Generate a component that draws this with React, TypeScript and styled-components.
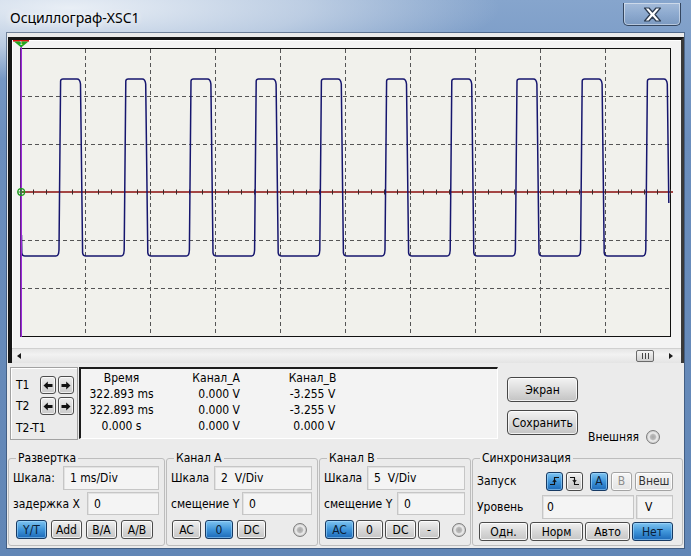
import React from "react";
import styled, { createGlobalStyle } from "styled-components";

const UI = `"DejaVu Sans Condensed", "DejaVu Sans", sans-serif`;

const Global = createGlobalStyle`
  html, body { margin: 0; padding: 0; }
  body { width: 691px; height: 556px; overflow: hidden; background: #6a8dbc; font-family: ${UI}; }
  * { box-sizing: border-box; }
`;

const Window = styled.div`
  width: 691px;
  height: 556px;
  display: flex;
  flex-direction: column;
  background:
    radial-gradient(ellipse 430px 72px at 70px 8px, rgba(236, 241, 247, 0.97), rgba(226, 233, 242, 0.6) 55%, rgba(226, 233, 242, 0) 100%),
    linear-gradient(180deg, #86a5cd 0%, #6b8ebd 25%, #6186b6 100%);
`;

const TitleBar = styled.div`
  height: 33px;
  flex: none;
  display: flex;
  align-items: flex-start;
  justify-content: space-between;
  padding: 0 10px 0 10px;
`;

const Title = styled.div`
  font-family: "Noto Sans", "Open Sans", sans-serif;
  font-size: 14px;
  line-height: 20px;
  margin-top: 8px;
  color: #000;
  text-shadow: 0 0 6px rgba(255, 255, 255, 0.95), 0 0 12px rgba(255, 255, 255, 0.7);
`;

const CloseButton = styled.div`
  margin-top: 3px;
  width: 58px;
  height: 23px;
  border: 1px solid #34465f;
  border-top: none;
  border-radius: 0 0 5px 5px;
  background: linear-gradient(180deg, rgba(255, 255, 255, 0.25), rgba(255, 255, 255, 0.08) 50%, rgba(0, 0, 0, 0.05));
  box-shadow: inset 0 0 0 1px rgba(255, 255, 255, 0.45);
  display: flex;
  align-items: center;
  justify-content: center;
`;

const Client = styled.div`
  flex: none;
  margin: 0 7px 8px 7px;
  height: 515px;
  background: #ebebeb;
  box-shadow: 0 0 0 1px rgba(40, 60, 90, 0.55);
  display: flex;
  flex-direction: column;
`;

const ScreenPanel = styled.div`
  margin: 4px 0 0 1px;
  width: 676px;
  border-left: 4px solid #161616;
  border-top: 3px solid #161616;
  border-right: 3px solid #3a3a3a;
  display: flex;
  flex-direction: column;
`;

const ScreenArea = styled.div`
  padding: 8px 10px 11px 8px;
  background: #f3f3f3;
  box-shadow: inset 0 1px 0 #ffffff, inset 1px 0 0 #ffffff;
`;

const GridBox = styled.div`
  width: 651px;
  height: 289px;
  background: #f1f1ec;
`;

const ScopeSvg = styled.svg`
  display: block;
  overflow: visible;
`;

const ScrollBar = styled.div`
  height: 15px;
  display: flex;
  align-items: center;
  padding: 0 8px 0 5px;
  background: linear-gradient(180deg, #e6e6e6, #f2f2f2 40%, #e4e4e4);
  border-top: 1px solid #d0d0d0;
`;

const ArrowTri = styled.div<{ $dir: "left" | "right" }>`
  width: 0;
  height: 0;
  border-top: 3.5px solid transparent;
  border-bottom: 3.5px solid transparent;
  ${(p) => (p.$dir === "left" ? "border-right: 4px solid #1a1a1a;" : "border-left: 4px solid #1a1a1a;")}
`;

const Spacer = styled.div`
  flex: 1;
`;

const Thumb = styled.div`
  width: 18px;
  height: 12px;
  margin-right: 15px;
  border: 1px solid #6a6a6a;
  border-radius: 2px;
  background: linear-gradient(180deg, #f4f4f4, #cfcfcf);
  display: flex;
  align-items: center;
  justify-content: center;
  gap: 2px;
`;

const Grip = styled.div`
  width: 1px;
  height: 6px;
  background: #444;
`;

const ReadoutRow = styled.div`
  margin-top: 4px;
  height: 73px;
  display: flex;
  align-items: flex-start;
  padding-left: 3px;
`;

const TPanel = styled.div`
  width: 68px;
  height: 73px;
  border: 1px solid #a2a2a2;
  box-shadow: inset 1px 1px 0 #ffffff;
  padding-left: 5px;
  display: flex;
  flex-direction: column;
`;

const TRow = styled.div<{ $mt: number }>`
  margin-top: ${(p) => p.$mt}px;
  height: 18px;
  display: flex;
  align-items: center;
  gap: 2px;
`;

const TLabel = styled.div<{ $w?: number }>`
  width: ${(p) => p.$w ?? 22}px;
  font-size: 12px;
  color: #000;
  line-height: 14px;
`;

const ArrowBtn = styled.div`
  width: 16px;
  height: 18px;
  border: 1px solid #4d4d4d;
  border-radius: 3px;
  background: linear-gradient(180deg, #ededed, #c9c9c9);
  box-shadow: inset 0 0 0 1px rgba(255, 255, 255, 0.7);
  display: flex;
  align-items: center;
  justify-content: center;
`;

const DiffLabel = styled.div`
  margin-top: 6px;
  height: 14px;
  font-size: 12px;
  line-height: 14px;
  color: #000;
`;

const ReadoutBox = styled.div`
  margin-left: 1px;
  width: 419px;
  height: 72px;
  border-top: 2px solid #1c1c1c;
  border-left: 2px solid #1c1c1c;
  border-right: 1px solid #ffffff;
  border-bottom: 1px solid #ffffff;
  background: #f3f3f3;
  padding-top: 1px;
  display: grid;
  grid-template-columns: 81px 83px 135px;
  grid-auto-rows: 16px;
  font-size: 12px;
  color: #000;
`;

const Cell = styled.div<{ $align: "center" | "right" }>`
  line-height: 16px;
  white-space: pre;
  text-align: ${(p) => p.$align};
  padding-right: ${(p) => (p.$align === "right" ? 5 : 0)}px;
`;

const ActionColumn = styled.div`
  margin-left: 9px;
  width: 71px;
  padding-top: 10px;
  display: flex;
  flex-direction: column;
  gap: 8px;
`;

const BigButton = styled.button`
  height: 25px;
  padding: 0;
  font-family: ${UI};
  font-size: 12px;
  color: #000;
  border: 1px solid #474747;
  border-radius: 4px;
  background: linear-gradient(180deg, #f3f3f3, #dcdcdc 50%, #c3c3c3);
  box-shadow: inset 0 0 0 1px rgba(255, 255, 255, 0.75);
`;

const External = styled.div`
  margin: 62px 0 0 10px;
  height: 16px;
  display: flex;
  align-items: center;
  gap: 7px;
  font-size: 12px;
  color: #000;
`;

const Radio = styled.div<{ $mr?: number }>`
  width: 14px;
  height: 14px;
  flex: none;
  margin-right: ${(p) => p.$mr ?? 0}px;
  border-radius: 50%;
  border: 1px solid #7d7d7d;
  background: radial-gradient(circle at 50% 50%, #a8a8a8 0, #b9b9b9 2.5px, #eeeeee 4px, #d6d6d6 5.5px, #b5b5b5 7px);
`;

const GroupsRow = styled.div`
  margin-top: 12px;
  display: flex;
  gap: 1px;
  padding-left: 1px;
`;

const Group = styled.fieldset<{ $w: number; $pr?: number }>`
  margin: 0;
  min-width: 0;
  width: ${(p) => p.$w}px;
  height: 94px;
  padding: 0 ${(p) => p.$pr ?? 5}px 0 4px;
  border: 1px solid #bdbdbd;
  border-radius: 3px;
  display: flex;
  flex-direction: column;
`;

const Legend = styled.legend`
  margin-left: 3px;
  padding: 0 2px;
  font-size: 12px;
  line-height: 13px;
  color: #000;
`;

const Row = styled.div<{ $h: number; $mt: number }>`
  height: ${(p) => p.$h}px;
  margin-top: ${(p) => p.$mt}px;
  display: flex;
  align-items: center;
`;

const Label = styled.div`
  font-size: 12px;
  color: #000;
  white-space: pre;
`;

const Field = styled.div<{ $w: number; $pl?: number }>`
  margin-left: auto;
  width: ${(p) => p.$w}px;
  height: 100%;
  padding-left: ${(p) => p.$pl ?? 6}px;
  display: flex;
  align-items: center;
  font-size: 12px;
  color: #000;
  white-space: pre;
  background: #f4f4f4;
  border: 1px solid #c6c6c6;
  box-shadow: inset 1px 1px 0 #e2e2e2;
`;

const FieldGroup = styled.div`
  margin-left: auto;
  height: 100%;
  display: flex;
  gap: 2px;
`;

const ButtonRow = styled.div<{ $pl: number; $gap: number }>`
  height: 100%;
  flex: 1;
  display: flex;
  align-items: center;
  gap: ${(p) => p.$gap}px;
  padding-left: ${(p) => p.$pl}px;
`;

const Btn = styled.button<{ $w: number; $on?: boolean; $dim?: boolean; $soft?: boolean }>`
  width: ${(p) => p.$w}px;
  height: 19px;
  flex: none;
  padding: 0;
  display: flex;
  align-items: center;
  justify-content: center;
  font-family: ${UI};
  font-size: 12px;
  color: ${(p) => (p.$dim ? "#8c8c8c" : p.$soft ? "#333" : p.$on ? "#0b1e38" : "#000")};
  border: 1px solid ${(p) => (p.$on ? "#173a63" : p.$dim || p.$soft ? "#a3a3a3" : "#4b4b4b")};
  border-radius: 3px;
  background: ${(p) =>
    p.$on
      ? "linear-gradient(180deg, #7fc4f0, #3f95da 50%, #1c69b8)"
      : p.$dim || p.$soft
      ? "linear-gradient(180deg, #f6f6f6, #e3e3e3)"
      : "linear-gradient(180deg, #f1f1f1, #d8d8d8 50%, #c6c6c6)"};
  box-shadow: inset 0 0 0 1px ${(p) => (p.$on ? "rgba(170, 220, 255, 0.55)" : "rgba(255, 255, 255, 0.8)")};
`;

const TrigButtons = styled.div`
  margin-left: auto;
  display: flex;
  align-items: center;
  gap: 3px;
`;

const SourceButtons = styled.div`
  margin-left: 7px;
  display: flex;
  align-items: center;
  gap: 3px;
`;

const HIGH = 31;
const LOW = 208;

function tracePath(): string {
  const period = 65.2;
  const first = 40;
  let d = `M1.5 187 L1.8 ${LOW - 3} Q2 ${LOW} 5 ${LOW}`;
  for (let k = 0; k < 10; k++) {
    const r = first + period * k;
    d += ` L${(r - 4).toFixed(1)} ${LOW} Q${(r - 1.2).toFixed(1)} ${LOW} ${(r - 1).toFixed(1)} ${LOW - 6}`;
    d += ` L${(r + 0.6).toFixed(1)} ${HIGH + 2} Q${(r + 0.8).toFixed(1)} ${HIGH} ${(r + 3).toFixed(1)} ${HIGH}`;
    d += ` L${(r + 17).toFixed(1)} ${HIGH} Q${(r + 20).toFixed(1)} ${HIGH} ${(r + 20.5).toFixed(1)} ${HIGH + 5}`;
    if (k < 9) {
      d += ` L${(r + 22.6).toFixed(1)} ${LOW - 3} Q${(r + 23).toFixed(1)} ${LOW} ${(r + 26).toFixed(1)} ${LOW}`;
    } else {
      d += ` L${(r + 22).toFixed(1)} 155`;
    }
  }
  return d;
}

const Scope: React.FC = () => {
  const vLines = Array.from({ length: 9 }, (_, i) => 65 * (i + 1) + 0.5);
  const hLines = [48, 96, 192, 240].map((y) => y + 0.5);
  const ticks = Array.from({ length: 50 }, (_, i) => 13 * (i + 1));
  return (
    <ScopeSvg width={651} height={289} viewBox="0 0 651 289">
      <rect x={0.5} y={0.5} width={650} height={288} fill="none" stroke="#111" strokeWidth={1} />
      {vLines.map((x) => (
        <line key={`v${x}`} x1={x} y1={1} x2={x} y2={288} stroke="#555" strokeWidth={1} strokeDasharray="4 3" />
      ))}
      {hLines.map((y) => (
        <line key={`h${y}`} x1={1} y1={y} x2={650} y2={y} stroke="#555" strokeWidth={1} strokeDasharray="4 3" />
      ))}
      <line x1={0} y1={144} x2={653} y2={144} stroke="#8a0c0c" strokeWidth={1.6} />
      {ticks.map((x) => (
        <line key={`t${x}`} x1={x + 0.5} y1={141.5} x2={x + 0.5} y2={146.5} stroke="#3a2a2a" strokeWidth={1} />
      ))}
      <path d={tracePath()} fill="none" stroke="#16166e" strokeWidth={1.5} strokeLinejoin="round" />
      <line x1={1.2} y1={-8} x2={1.2} y2={289} stroke="#9a2bd8" strokeWidth={1.6} />
      <rect x={-7} y={-8} width={16} height={1.6} fill="#d81010" />
      <polygon points="-6,-6.4 8.5,-6.4 1.2,-0.5" fill="#1fa51f" />
      <text x={1.2} y={-3} fontSize={5} fill="#ffffff" textAnchor="middle" fontFamily="DejaVu Sans, sans-serif">
        1
      </text>
      <circle cx={1.2} cy={144} r={3.4} fill="none" stroke="#1f9a1f" strokeWidth={1.2} />
      <line x1={-2.6} y1={144} x2={5} y2={144} stroke="#1f9a1f" strokeWidth={1} />
      <line x1={1.2} y1={140.4} x2={1.2} y2={147.6} stroke="#1f9a1f" strokeWidth={1} />
    </ScopeSvg>
  );
};

const Arrow: React.FC<{ dir: "left" | "right" }> = ({ dir }) => (
  <svg width={10} height={9} viewBox="0 0 10 9">
    <path
      d="M0.5 4.5 L4.8 0.5 V3 H9.5 V6 H4.8 V8.5 Z"
      fill="#111"
      transform={dir === "right" ? "translate(10 0) scale(-1 1)" : undefined}
    />
  </svg>
);

const EdgeIcon: React.FC<{ falling?: boolean }> = ({ falling }) => (
  <svg width={11} height={12} viewBox="0 0 11 12">
    {falling ? (
      <>
        <path d="M1 2.5 H5.5 V9.5 H10" fill="none" stroke="#111" strokeWidth={1.1} />
        <path d="M3.8 5 L5.5 7.2 L7.2 5" fill="none" stroke="#111" strokeWidth={1.1} />
      </>
    ) : (
      <>
        <path d="M1 9.5 H5.5 V2.5 H10" fill="none" stroke="#111" strokeWidth={1.1} />
        <path d="M3.8 7 L5.5 4.8 L7.2 7" fill="none" stroke="#111" strokeWidth={1.1} />
      </>
    )}
  </svg>
);

const CloseGlyph: React.FC = () => (
  <svg width={19} height={15} viewBox="0 0 19 15">
    <path
      d="M1.5 1 H6 L9.5 5 L13 1 H17.5 L12 7.5 L17.5 14 H13 L9.5 10 L6 14 H1.5 L7 7.5 Z"
      fill="#ffffff"
      stroke="#2b3a4f"
      strokeWidth={1.2}
      strokeLinejoin="round"
    />
  </svg>
);

const readout: [string, string, string][] = [
  ["Время", "Канал_A", "Канал_B"],
  ["322.893 ms", "0.000 V", "-3.255 V"],
  ["322.893 ms", "0.000 V", "-3.255 V"],
  ["0.000 s", "0.000 V", " 0.000 V"],
];

export default function App() {
  return (
    <>
      <Global />
      <Window>
        <TitleBar>
          <Title>Осциллограф-XSC1</Title>
          <CloseButton>
            <CloseGlyph />
          </CloseButton>
        </TitleBar>
        <Client>
          <ScreenPanel>
            <ScreenArea>
              <GridBox>
                <Scope />
              </GridBox>
            </ScreenArea>
            <ScrollBar>
              <ArrowTri $dir="left" />
              <Spacer />
              <Thumb>
                <Grip />
                <Grip />
                <Grip />
              </Thumb>
              <ArrowTri $dir="right" />
            </ScrollBar>
          </ScreenPanel>

          <ReadoutRow>
            <TPanel>
              <TRow $mt={8}>
                <TLabel>T1</TLabel>
                <ArrowBtn>
                  <Arrow dir="left" />
                </ArrowBtn>
                <ArrowBtn>
                  <Arrow dir="right" />
                </ArrowBtn>
              </TRow>
              <TRow $mt={3}>
                <TLabel>T2</TLabel>
                <ArrowBtn>
                  <Arrow dir="left" />
                </ArrowBtn>
                <ArrowBtn>
                  <Arrow dir="right" />
                </ArrowBtn>
              </TRow>
              <DiffLabel>T2-T1</DiffLabel>
            </TPanel>
            <ReadoutBox>
              {readout.map((row, i) => (
                <React.Fragment key={i}>
                  <Cell $align="center">{row[0]}</Cell>
                  <Cell $align="right">{row[1]}</Cell>
                  <Cell $align="center">{row[2]}</Cell>
                </React.Fragment>
              ))}
            </ReadoutBox>
            <ActionColumn>
              <BigButton>Экран</BigButton>
              <BigButton>Сохранить</BigButton>
            </ActionColumn>
            <External>
              <span>Внешняя</span>
              <Radio />
            </External>
          </ReadoutRow>

          <GroupsRow>
            <Group $w={157}>
              <Legend>Развертка</Legend>
              <Row $h={24} $mt={1}>
                <Label>Шкала:</Label>
                <Field $w={96}>1 ms/Div</Field>
              </Row>
              <Row $h={23} $mt={2}>
                <Label>задержка X</Label>
                <Field $w={72}>0</Field>
              </Row>
              <Row $h={19} $mt={5}>
                <ButtonRow $pl={3} $gap={4}>
                  <Btn $w={31} $on>
                    Y/T
                  </Btn>
                  <Btn $w={31}>Add</Btn>
                  <Btn $w={31}>B/A</Btn>
                  <Btn $w={32}>A/B</Btn>
                </ButtonRow>
              </Row>
            </Group>

            <Group $w={152}>
              <Legend>Канал A</Legend>
              <Row $h={24} $mt={1}>
                <Label>Шкала</Label>
                <Field $w={98}>2  V/Div</Field>
              </Row>
              <Row $h={23} $mt={2}>
                <Label>смещение Y</Label>
                <Field $w={70}>0</Field>
              </Row>
              <Row $h={19} $mt={5}>
                <ButtonRow $pl={1} $gap={4}>
                  <Btn $w={29}>AC</Btn>
                  <Btn $w={28} $on>
                    0
                  </Btn>
                  <Btn $w={29}>DC</Btn>
                  <Spacer />
                  <Radio $mr={5} />
                </ButtonRow>
              </Row>
            </Group>

            <Group $w={152}>
              <Legend>Канал B</Legend>
              <Row $h={24} $mt={1}>
                <Label>Шкала</Label>
                <Field $w={98}>5  V/Div</Field>
              </Row>
              <Row $h={23} $mt={2}>
                <Label>смещение Y</Label>
                <Field $w={68}>0</Field>
              </Row>
              <Row $h={19} $mt={5}>
                <ButtonRow $pl={1} $gap={2}>
                  <Btn $w={29} $on>
                    AC
                  </Btn>
                  <Btn $w={27}>0</Btn>
                  <Btn $w={31}>DC</Btn>
                  <Btn $w={22}>-</Btn>
                  <Spacer />
                  <Radio $mr={-1} />
                </ButtonRow>
              </Row>
            </Group>

            <Group $w={211} $pr={9}>
              <Legend>Синхронизация</Legend>
              <Row $h={18} $mt={7}>
                <Label>Запуск</Label>
                <TrigButtons>
                  <Btn $w={17} $on>
                    <EdgeIcon />
                  </Btn>
                  <Btn $w={17}>
                    <EdgeIcon falling />
                  </Btn>
                </TrigButtons>
                <SourceButtons>
                  <Btn $w={18} $on>
                    A
                  </Btn>
                  <Btn $w={21} $dim>
                    B
                  </Btn>
                  <Btn $w={38} $soft>
                    Внеш
                  </Btn>
                </SourceButtons>
              </Row>
              <Row $h={24} $mt={5}>
                <Label>Уровень</Label>
                <FieldGroup>
                  <Field $w={92} $pl={4}>
                    0
                  </Field>
                  <Field $w={37} $pl={8}>
                    V
                  </Field>
                </FieldGroup>
              </Row>
              <Row $h={19} $mt={3}>
                <ButtonRow $pl={2} $gap={2}>
                  <Btn $w={49}>Одн.</Btn>
                  <Btn $w={53}>Норм</Btn>
                  <Btn $w={45}>Авто</Btn>
                  <Btn $w={41} $on>
                    Нет
                  </Btn>
                </ButtonRow>
              </Row>
            </Group>
          </GroupsRow>
        </Client>
      </Window>
    </>
  );
}
